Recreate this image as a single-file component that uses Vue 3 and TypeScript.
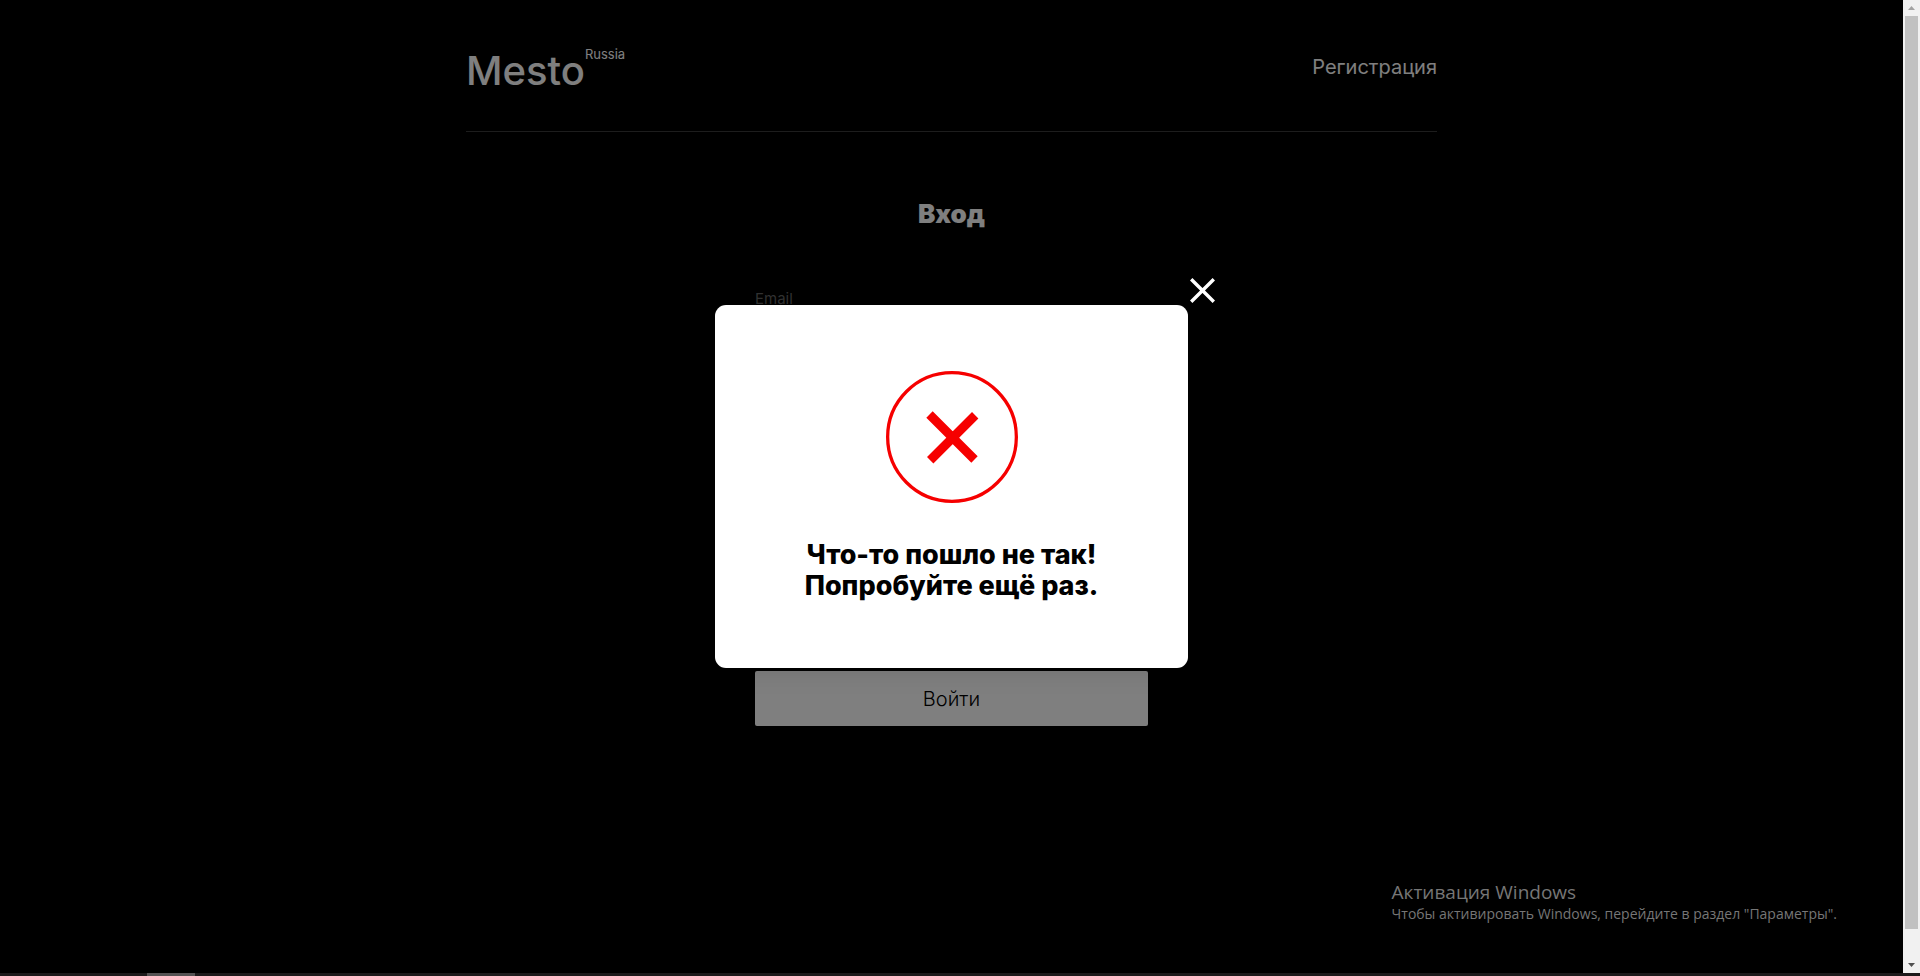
<script setup lang="ts">
import { ref } from 'vue'

const email = ref('')
const password = ref('')
const isTooltipOpen = ref(true)

function closeTooltip(): void {
  isTooltipOpen.value = false
}

function submit(): void {
  isTooltipOpen.value = true
}
</script>

<template>
  <div class="screen">
    <div class="viewport">
      <div class="page">
        <header class="header">
          <a class="logo" href="#" aria-label="Mesto Russia">
            <span class="logo-name">Mesto</span><span class="logo-region">Russia</span>
          </a>
          <a class="header-link" href="#sign-up">Регистрация</a>
        </header>
        <main class="auth">
          <h1 class="auth-title">Вход</h1>
          <form class="auth-form" @submit.prevent="submit">
            <input v-model="email" class="auth-input" type="email" placeholder="Email" aria-label="Email" />
            <input v-model="password" class="auth-input" type="password" aria-label="Password" />
            <button class="auth-button" type="submit">Войти</button>
          </form>
        </main>
      </div>

      <div v-if="isTooltipOpen" class="overlay">
        <div class="popup" role="dialog" aria-labelledby="popup-title">
          <button class="popup-close" type="button" aria-label="Закрыть" @click="closeTooltip">
            <svg viewBox="0 0 25 25" width="25" height="25" aria-hidden="true">
              <path d="M1.200 1.200 23.800 23.800M23.800 1.200 1.200 23.800" fill="none" stroke="#fff" stroke-width="3.4" />
            </svg>
          </button>
          <svg class="popup-icon" viewBox="0 0 132 132" width="132" height="132" aria-hidden="true">
            <circle cx="66" cy="66" r="64.35" fill="none" stroke="#f60000" stroke-width="3.3" />
            <path d="M43.5 43.5 88.5 88.5M89.2 44.2 44.2 89.2" fill="none" stroke="#f60000" stroke-width="9" />
          </svg>
          <h2 id="popup-title" class="popup-title">Что-то пошло не так!<br />Попробуйте ещё раз.</h2>
        </div>
      </div>

      <aside class="watermark">
        <p class="watermark-title">Активация Windows</p>
        <p class="watermark-text">Чтобы активировать Windows, перейдите в раздел "Параметры".</p>
      </aside>
    </div>

    <div class="scrollbar" aria-hidden="true">
      <svg viewBox="0 0 17 16" width="17" height="16"><path d="M5 10h7L8.500 6z" fill="#a3a3a3" /></svg>
      <div class="scrollbar-track"><div class="scrollbar-thumb"></div></div>
      <svg viewBox="0 0 17 16" width="17" height="16"><path d="M5 6h7l-3.500 4z" fill="#505050" /></svg>
    </div>
    <div class="taskbar" aria-hidden="true"><div class="taskbar-item"></div></div>
  </div>
</template>

<style>
body {
  margin: 0;
  background: #000;
}
</style>

<style scoped>
.screen {
  display: grid;
  grid-template-columns: minmax(0, 1fr) 17px;
  grid-template-rows: minmax(0, 1fr) 3px;
  height: 100vh;
  font-family: Inter, "Liberation Sans", sans-serif;
  color: #fff;
  background: #000;
}

.viewport {
  position: relative;
  overflow: hidden;
}

.page {
  max-width: 971px;
  margin: 0 auto;
}

.header {
  display: flex;
  justify-content: space-between;
  align-items: flex-start;
  padding: 46px 0 36px;
  border-bottom: 1px solid #3b3b3b;
}

.logo {
  display: flex;
  align-items: flex-start;
  color: #fff;
  text-decoration: none;
}

.logo-name {
  font-size: 40px;
  font-weight: 500;
  line-height: 49px;
}

.logo-region {
  font-size: 13px;
  line-height: 16px;
}

.header-link {
  padding-top: 9px;
  font-size: 20px;
  line-height: 24px;
  color: #fff;
  text-decoration: none;
}

.auth {
  display: flex;
  flex-direction: column;
  align-items: center;
  padding-top: 66px;
}

.auth-title {
  margin: 0;
  font-size: 26px;
  font-weight: 900;
  line-height: 32px;
}

.auth-form {
  display: flex;
  flex-direction: column;
  width: 100%;
  max-width: 393px;
  padding-top: 57px;
}

.auth-input {
  box-sizing: border-box;
  width: 100%;
  height: 32px;
  margin-bottom: 32px;
  padding: 0 0 8px;
  border: 0;
  border-bottom: 2px solid #ccc;
  background: transparent;
  font-family: inherit;
  font-size: 15px;
  color: #fff;
}

.auth-input::placeholder {
  color: #666;
  opacity: 1;
}

.auth-button {
  height: 55px;
  margin-top: 256px;
  padding: 0;
  border: 0;
  border-radius: 2px;
  background: #fff;
  font-family: inherit;
  font-size: 20px;
  font-weight: 300;
  line-height: 24px;
  color: #000;
}

.overlay {
  position: absolute;
  inset: 0;
  display: flex;
  align-items: center;
  justify-content: center;
  background: rgba(0, 0, 0, 0.5);
}

.popup {
  position: relative;
  display: flex;
  flex-direction: column;
  align-items: center;
  gap: 36px;
  box-sizing: border-box;
  width: 473px;
  max-width: 90%;
  padding: 66px 32px 67px;
  border-radius: 11px;
  background: #fff;
  box-shadow: 0 0 28px rgba(0, 0, 0, 0.15);
}

.popup-icon {
  display: block;
}

.popup-title {
  margin: 0;
  font-size: 27px;
  font-weight: 800;
  line-height: 31px;
  text-align: center;
  color: #000;
}

.popup-close {
  position: absolute;
  left: 100%;
  bottom: 100%;
  display: flex;
  padding: 2px;
  border: 0;
  background: transparent;
  cursor: pointer;
}

.watermark {
  position: absolute;
  right: 66px;
  bottom: 49px;
  font-family: "Open Sans", "Noto Sans", sans-serif;
  color: #767676;
}

.watermark-title,
.watermark-text {
  margin: 0;
  white-space: nowrap;
}

.watermark-title {
  font-size: 19px;
  line-height: 24px;
}

.watermark-text {
  font-size: 14px;
  line-height: 20px;
}

.scrollbar {
  display: flex;
  flex-direction: column;
  background: #f1f1f1;
}

.scrollbar-track {
  flex: 1;
  padding: 0 2px;
}

.scrollbar-thumb {
  height: 97%;
  background: #c1c1c1;
}

.taskbar {
  grid-column: 1 / -1;
  background: #1c1a1b;
}

.taskbar-item {
  width: 48px;
  height: 100%;
  margin-left: 147px;
  background: #545253;
}
</style>
